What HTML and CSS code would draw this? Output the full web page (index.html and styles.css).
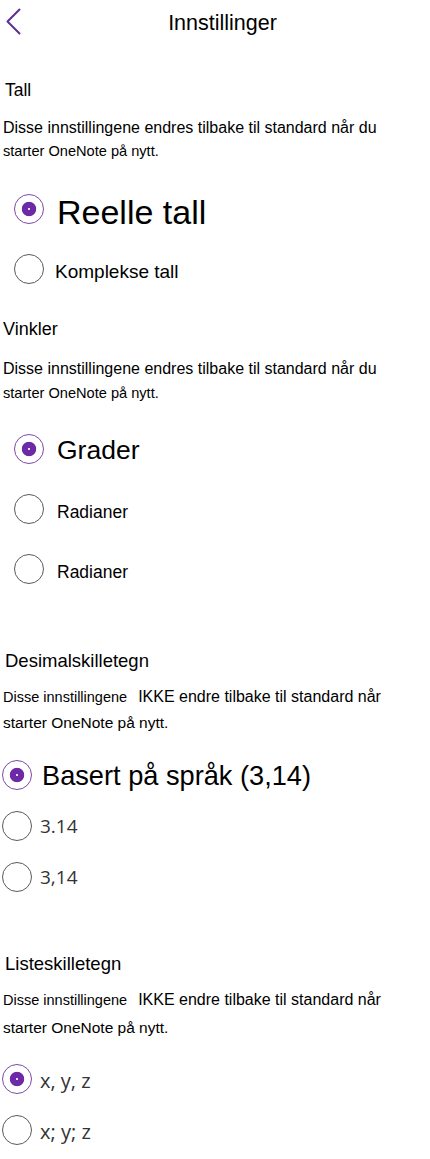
FILE: index.html
```html
<!DOCTYPE html>
<html lang="nb">
<head>
<meta charset="utf-8">
<title>Innstillinger</title>
<link rel="stylesheet" href="styles.css">
</head>
<body>
<header class="topbar">
  <button class="back" aria-label="Tilbake">
    <svg width="16" height="28" viewBox="0 0 16 28" aria-hidden="true">
      <polyline points="13.5,1.5 1.5,13.5 13.5,25.5" fill="none" stroke="#5f2f93" stroke-width="2" stroke-linecap="round" stroke-linejoin="round"/>
    </svg>
  </button>
  <h1 class="title">Innstillinger</h1>
</header>

<main>
  <section class="group group-numbers">
    <h2 class="group-title">Tall</h2>
    <p class="note"><span class="line-a">Disse innstillingene endres tilbake til standard når du</span><br><span class="line-b">starter OneNote på nytt.</span></p>
    <div class="options">
      <label class="option"><input type="radio" name="tall" checked><span class="label label-xl">Reelle tall</span></label>
      <label class="option option-k"><input type="radio" name="tall"><span class="label label-md">Komplekse tall</span></label>
    </div>
  </section>

  <section class="group group-angles">
    <h2 class="group-title">Vinkler</h2>
    <p class="note"><span class="line-a">Disse innstillingene endres tilbake til standard når du</span><br><span class="line-b">starter OneNote på nytt.</span></p>
    <div class="options">
      <label class="option"><input type="radio" name="vinkler" checked><span class="label label-lg">Grader</span></label>
      <label class="option"><input type="radio" name="vinkler"><span class="label label-sm">Radianer</span></label>
      <label class="option"><input type="radio" name="vinkler"><span class="label label-sm">Radianer</span></label>
    </div>
  </section>

  <section class="group group-decimal">
    <h2 class="group-title">Desimalskilletegn</h2>
    <p class="note note-mixed"><span class="lead">Disse innstillingene</span><span class="emph">IKKE endre tilbake til standard når</span><br>starter OneNote på nytt.</p>
    <div class="options options-tight">
      <label class="option"><input type="radio" name="desimal" checked><span class="label label-lg label-wide">Basert på språk (3,14)</span></label>
      <label class="option"><input type="radio" name="desimal"><span class="label label-ui">3.14</span></label>
      <label class="option"><input type="radio" name="desimal"><span class="label label-ui">3,14</span></label>
    </div>
  </section>

  <section class="group group-list">
    <h2 class="group-title">Listeskilletegn</h2>
    <p class="note note-mixed"><span class="lead">Disse innstillingene</span><span class="emph">IKKE endre tilbake til standard når</span><br>starter OneNote på nytt.</p>
    <div class="options options-tight">
      <label class="option"><input type="radio" name="liste" checked><span class="label label-ui label-ui-lg">x, y, z</span></label>
      <label class="option"><input type="radio" name="liste"><span class="label label-ui label-ui-lg">x; y; z</span></label>
    </div>
  </section>
</main>
</body>
</html>
```

FILE: styles.css
```css
* {
  box-sizing: border-box;
}

html,
body {
  margin: 0;
  padding: 0;
  background: #ffffff;
}

body {
  width: 430px;
  min-height: 1159px;
  font-family: "Liberation Sans", Arial, sans-serif;
  color: #000000;
}

/* Top bar: back chevron and centred title */
.topbar {
  display: flex;
  align-items: flex-start;
  padding: 8px 0 0 0;
  height: 38px;
}

.back {
  flex: 0 0 auto;
  width: 30px;
  padding: 0 0 0 6px;
  margin: 0;
  border: 0;
  background: none;
  display: flex;
  align-items: flex-start;
  cursor: pointer;
}

.back svg {
  display: block;
}

.title {
  flex: 1 1 auto;
  margin: 0;
  padding-right: 15px;
  text-align: center;
  font-size: 21.5px;
  line-height: 30px;
  font-weight: 400;
}

/* Setting groups */
.group {
  padding: 0 3px;
}

.group-title {
  margin: 0;
  font-weight: 400;
  font-size: 18px;
  line-height: 24px;
}

.note {
  margin: 0;
  font-size: 15.5px;
  line-height: 23px;
}

.note .line-a {
  font-size: 16px;
}

.note .line-b {
  font-size: 14.6px;
}

.group-numbers {
  margin-top: 40px;
}
.group-numbers .group-title {
  font-size: 17.5px;
  padding-left: 2px;
}
.group-numbers .note {
  margin-top: 14px;
}
.group-numbers .options {
  margin-top: 31px;
}

.group-angles {
  margin-top: 33px;
}
.group-angles .note {
  margin-top: 16px;
  line-height: 24px;
}
.group-angles .options {
  margin-top: 29px;
}

.group-decimal {
  margin-top: 65px;
}
.group-decimal .group-title {
  font-size: 18.5px;
  padding-left: 2px;
}
.group-decimal .note {
  margin-top: 11px;
  line-height: 25px;
}
.group-decimal .options {
  margin-top: 25px;
}

.group-list {
  margin-top: 60px;
}
.group-list .group-title {
  font-size: 18.5px;
  padding-left: 2px;
}
.group-list .note {
  margin-top: 10px;
  line-height: 27px;
}
.group-list .options {
  margin-top: 23px;
}

.note-mixed .lead {
  font-size: 14.5px;
  margin-right: 11px;
}
.note-mixed .emph {
  font-size: 16px;
}

/* Radio lists */
.options {
  display: flex;
  flex-direction: column;
  gap: 30px;
  padding-left: 11px;
}

.options-tight {
  gap: 21px;
  padding-left: 0;
  margin-left: -1px;
}

.option {
  display: flex;
  align-items: center;
  height: 30px;
  gap: 13px;
  cursor: pointer;
}

.option-k {
  gap: 11px;
}

.options-tight .option {
  gap: 10px;
}

.option input {
  appearance: none;
  -webkit-appearance: none;
  flex: 0 0 auto;
  width: 30px;
  height: 30px;
  margin: 0;
  border: 1px solid #5a5a5a;
  border-radius: 50%;
  background: #ffffff;
}

.option input:checked {
  border-color: #7d4aa3;
  background: radial-gradient(circle at center, #fff 0 0.6px, #6e2aa6 1.2px 6.8px, #ffffff 7.6px);
}

.label {
  white-space: nowrap;
  line-height: 30px;
}

.label-xl {
  font-size: 34px;
  padding-top: 6px;
}

.label-lg {
  font-size: 26.5px;
  padding-top: 2px;
}

.label-wide {
  font-size: 27.2px;
}

.label-md {
  font-size: 19px;
  padding-top: 6px;
}

.label-sm {
  font-size: 17.5px;
  padding-top: 6px;
}

.label-ui {
  font-family: "Open Sans", "Noto Sans", sans-serif;
  font-size: 19px;
  color: #333333;
}

.options-tight .option .label-ui {
  margin-left: -2px;
}

.label-ui-lg {
  font-size: 20px;
  padding-top: 4px;
}
```
